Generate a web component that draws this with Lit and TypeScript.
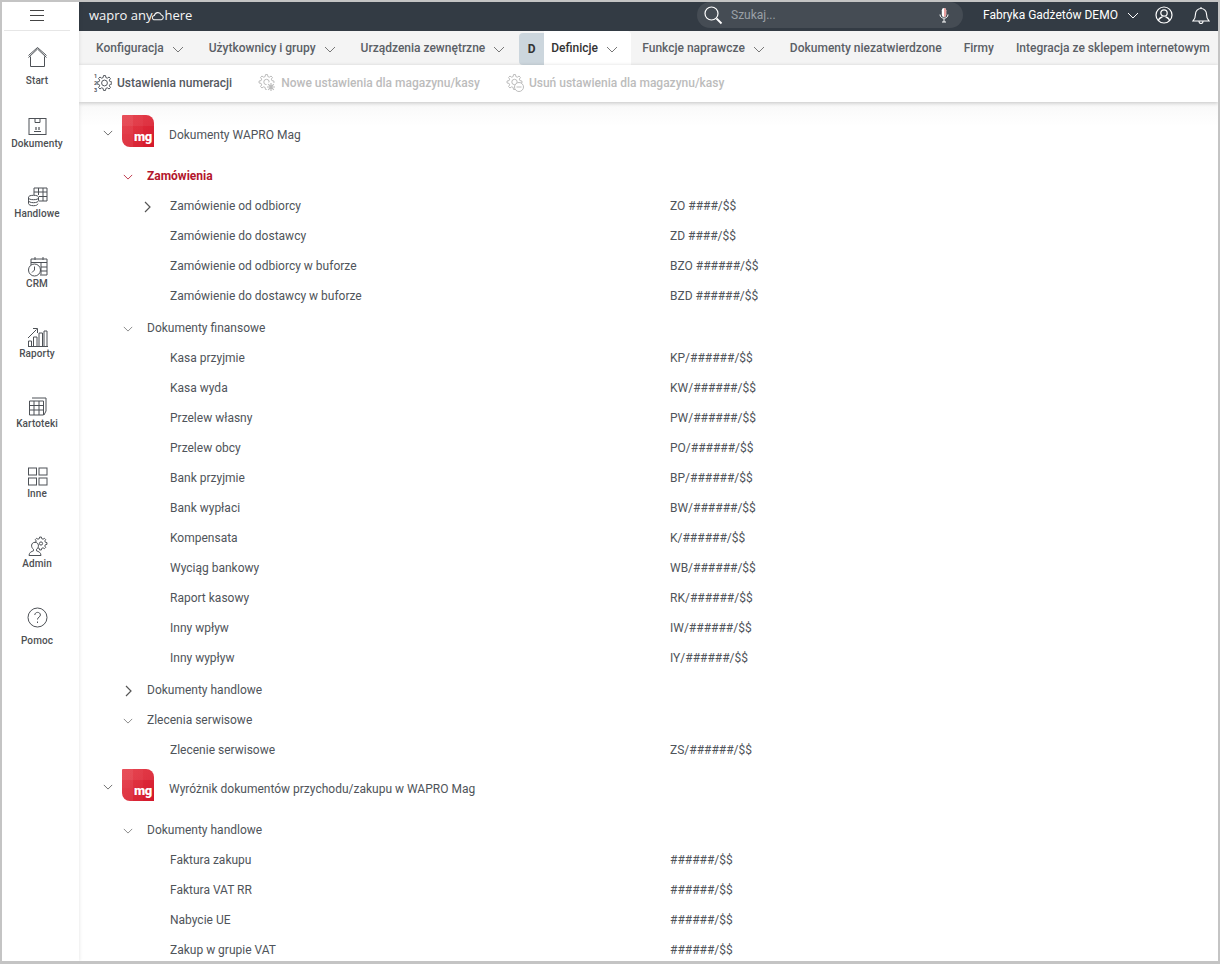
import { LitElement, html, css, svg } from "lit";
import { customElement } from "lit/decorators.js";

const chevDown = html`<svg class="chev" viewBox="0 0 12 7"><path d="M1 1l5 5 5-5" fill="none" stroke="currentColor" stroke-width="1"/></svg>`;
const chevRight = html`<svg class="chevr" viewBox="0 0 7 12"><path d="M1 1l5 5-5 5" fill="none" stroke="currentColor" stroke-width="1.2"/></svg>`;

function gearPath(cx: number, cy: number, ro: number, ri: number, teeth = 8) {
  const pts: string[] = [];
  const step = (Math.PI * 2) / teeth;
  for (let i = 0; i < teeth; i++) {
    const a = i * step - Math.PI / 2;
    const at = (r: number, d: number) =>
      `${(cx + r * Math.cos(a + d * step)).toFixed(2)} ${(cy + r * Math.sin(a + d * step)).toFixed(2)}`;
    pts.push(at(ri, -0.32), at(ro, -0.17), at(ro, 0.17), at(ri, 0.32));
  }
  return "M" + pts.join("L") + "Z";
}

const navIcons: Record<string, unknown> = {
  Start: svg`<path d="M1.500 10.500L10.500 2 19.500 10.500M1.500 8.500L10.500 0.500 19.500 8.500M3.500 9.500v10h14v-10"/>`,
  Dokumenty: svg`<rect x="2" y="2.500" width="17" height="16"/><path d="M8 2.500v4h5v-4M7 15.500h7"/><path d="M9 11v3M12 11v3" stroke-width="1.200"/>`,
  Handlowe: svg`<path d="M7 2h13v13H12M7 2v7M7 6h13M11.500 2v7M16 2v13M12 10.500h8"/><ellipse cx="6.500" cy="11.500" rx="5" ry="2.200"/><path d="M1.500 11.500v3c0 1.200 2 2.200 5 2.200s5-1 5-2.200v-3M1.500 14.500v3c0 1.200 2 2.200 5 2.200s4-.8 4.500-2"/>`,
  CRM: svg`<path d="M4 9V3h16v16h-7M4 6.500h16M8 1v3M16 1v3M14 11h6M14 15h6M14 6.500v12"/><circle cx="7.500" cy="14" r="6"/><path d="M7.500 10.500V14l-2.500 2.500"/>`,
  Raporty: svg`<path d="M1.500 20v-5h3v5M6.500 20V11h3.500v9M12 20V7h3.500v13M17 20V5h3v15M1 20.500h20M1 12L9.500 3.500M6 2.500h4.500v4.500"/>`,
  Kartoteki: svg`<path d="M5 2h14v13l-2 4M2.500 5h14v14H2.500zM2.500 9.500h14M2.500 14h14M7 5v14M12 5v14"/>`,
  Inne: svg`<rect x="1.500" y="2" width="8" height="7"/><rect x="12" y="2" width="8" height="7"/><rect x="1.500" y="12" width="8" height="7"/><rect x="12" y="12" width="8" height="7"/>`,
  Admin: svg`<path d="${gearPath(13.5, 7.5, 6.5, 5)}"/><circle cx="14" cy="7.500" r="1.600"/><path d="M2 19.500c0-3 2.500-4 4.500-4.700v-1.500c-3-2-2.500-7 1.500-7s4.500 5 1.500 7v1.500c2 .7 4.500 1.700 4.500 4.700z" fill="#fff"/>`,
};

const doc = (name: string, code: string, cls = "") => ({ name, code, cls });

@customElement("app-root")
export class AppRoot extends LitElement {
  static styles = css`
    :host {
      display: flex;
      box-sizing: border-box;
      width: 1220px;
      height: 964px;
      border: solid #c4c4c4;
      border-width: 2px 2px 3px 2px;
      background: #fff;
      font-family: Roboto, "Liberation Sans", sans-serif;
      color: #4a4f55;
      overflow: hidden;
    }
    .side {
      width: 77px;
      flex: none;
      box-sizing: border-box;
      padding-right: 7px;
      display: flex;
      flex-direction: column;
      align-items: center;
      box-shadow: 1px 0 3px rgba(0, 0, 0, 0.08);
      z-index: 2;
      background: #fff;
    }
    .burger {
      width: 66px;
      height: 27px;
      border-bottom: 1px solid #e6e6e6;
      display: flex;
      align-items: center;
      justify-content: center;
      padding-bottom: 1px;
      flex: none;
    }
    .burger svg {
      width: 14px;
      height: 13px;
      display: block;
      margin-top: -1px;
    }
    .nav {
      height: 70px;
      width: 70px;
      flex: none;
      display: flex;
      flex-direction: column;
      align-items: center;
      font-size: 10px;
      font-weight: 500;
      letter-spacing: 0.1px;
      color: #4d4f53;
    }
    .nav svg {
      width: 21px;
      height: 21px;
      fill: none;
      stroke: #4d5156;
      stroke-width: 1;
      margin-bottom: 1px;
      display: block;
    }
    .nav span {
      line-height: 12px;
    }
    .start {
      margin-top: 16px;
      height: 69px;
    }
    .start svg {
      margin-bottom: 7px;
    }
    .help {
      margin-top: 1px;
    }
    .help svg {
      margin-bottom: 7px;
    }
    .main {
      flex: 1;
      min-width: 0;
      display: flex;
      flex-direction: column;
    }
    .top {
      height: 29px;
      flex: none;
      background: #333b44;
      display: flex;
      align-items: center;
      color: #fff;
      white-space: nowrap;
    }
    .logo {
      font-family: "Open Sans", Roboto, sans-serif;
      font-size: 13px;
      width: 618px;
      box-sizing: border-box;
      padding-left: 10px;
      flex: none;
      display: flex;
      align-items: center;
      color: #f6f6f6;
      margin-top: -3px;
    }
    .logo svg {
      width: 12px;
      height: 10px;
      margin: 1px 0 0 0;
    }
    .search {
      width: 266px;
      height: 26px;
      margin-top: -3px;
      border-radius: 13px;
      background: #454c54;
      display: flex;
      align-items: center;
      flex: none;
      box-sizing: border-box;
      padding: 0 14px 0 6px;
      font-size: 12px;
      color: #9aa0a6;
    }
    .search .lens {
      width: 20px;
      height: 20px;
      margin-right: 8px;
    }
    .search span {
      flex: 1;
    }
    .search .mic {
      width: 10px;
      height: 16px;
    }
    .company {
      font-size: 12px;
      font-weight: 400;
      margin-left: 20px;
      margin-top: -3px;
      color: #fff;
      display: flex;
      align-items: center;
      flex: none;
    }
    .company .chev {
      margin-left: 9px;
      color: #fff;
    }
    .uicon {
      width: 18px;
      height: 18px;
      flex: none;
      margin-left: 16px;
      margin-top: -3px;
      fill: none;
      stroke: #fff;
    }
    .bell {
      margin-left: 19px;
    }
    .tabs {
      height: 34px;
      flex: none;
      background: #f4f4f4;
      display: flex;
      align-items: center;
      font-size: 12px;
      font-weight: 500;
      color: #5b6066;
      white-space: nowrap;
      position: relative;
    }
    .tab {
      display: flex;
      align-items: center;
      height: 100%;
    }
    .chev {
      width: 12px;
      height: 7px;
      flex: none;
      color: #777;
    }
    .tab .chev {
      margin: 2px 0 0 8px;
    }
    .badge {
      width: 25px;
      height: 32px;
      margin-top: 2px;
      background: #ccd6dd;
      border-radius: 4px 0 0 4px;
      display: flex;
      align-items: center;
      justify-content: center;
      font-weight: 700;
      color: #333;
      flex: none;
    }
    .active {
      background: #fff;
      color: #333;
      width: 87px;
      box-sizing: border-box;
      padding-left: 7px;
      border-radius: 0 4px 0 0;
      flex: none;
    }
    .tool {
      height: 37px;
      box-sizing: border-box;
      padding-bottom: 2px;
      flex: none;
      background: #fff;
      display: flex;
      align-items: center;
      font-size: 12px;
      font-weight: 500;
      color: #55595f;
      box-shadow: 0 1px 4px rgba(0, 0, 0, 0.22);
      position: relative;
      z-index: 1;
    }
    .tbtn {
      display: flex;
      align-items: center;
      white-space: nowrap;
    }
    .tbtn svg {
      width: 18px;
      height: 18px;
      fill: none;
      stroke: currentColor;
      stroke-width: 1;
      margin-right: 5px;
      flex: none;
    }
    .tbtn text {
      font: 700 5.500px Roboto, sans-serif;
      fill: currentColor;
      stroke: none;
    }
    .dis {
      color: #bcbcbc;
    }
    .content {
      flex: 1;
      min-height: 0;
      overflow: hidden;
      padding-top: 17px;
      font-size: 12px;
      color: #4f545a;
      background: linear-gradient(#f8f8f8, #fff 24px);
    }
    .row {
      display: grid;
      grid-template-columns: 591px 1fr;
      height: 30px;
      align-items: center;
    }
    .cell {
      display: flex;
      align-items: center;
      min-width: 0;
    }
    .head {
      height: 32px;
      grid-template-rows: 32px;
    }
    .head .cell {
      padding-left: 24px;
    }
    .head .chev {
      width: 10px;
      height: 6px;
      margin-top: -4px;
      margin-right: 9px;
      color: #555;
    }
    .head .nm {
      margin-left: 15px;
    }
    .mg {
      width: 32px;
      height: 32px;
      margin-bottom: 8px;
      flex: none;
      border-radius: 1px 8px 0 8px;
      background:
        linear-gradient(90deg, rgba(255, 255, 255, 0.09) 0 33%, rgba(255, 255, 255, 0.03) 33% 66%, transparent 66%),
        linear-gradient(180deg, rgba(255, 255, 255, 0.08) 0 33%, rgba(255, 255, 255, 0.02) 33% 60%, transparent 60%),
        linear-gradient(135deg, #e52e3a, #d3182b);
      color: #fff;
      font: 900 13px/1 Roboto, sans-serif;
      letter-spacing: -0.3px;
      display: flex;
      justify-content: flex-end;
      align-items: flex-end;
      padding: 0 2px 4px 0;
      box-sizing: border-box;
    }
    .lv1 .cell {
      padding-left: 44px;
    }
    .lv1 .chev {
      width: 10px;
      height: 6px;
      margin-right: 14px;
      margin-top: 2px;
    }
    .lv1 .chevr {
      width: 7px;
      height: 12px;
      margin: 2px 15px 0 2px;
      flex: none;
      color: #555;
    }
    .red {
      color: #b3162c;
      font-weight: 700;
    }
    .red .chev {
      color: #b3162c;
    }
    .lv2 .cell {
      padding-left: 91px;
    }
    .lv2 .chevr {
      width: 7px;
      height: 12px;
      margin: 2px 19px 0 -26px;
      flex: none;
      color: #555;
    }
    .gap2 {
      margin-top: 2px;
    }
    .gap10 {
      margin-top: 10px;
    }
    .gap8 {
      margin-top: 8px;
    }
  `;

  private row2(d: { name: string; code: string; cls: string }) {
    return html`<div class="row lv2 ${d.cls}">
      <div class="cell">${d.cls.includes("exp") ? chevRight : ""}<span>${d.name}</span></div>
      <div>${d.code}</div>
    </div>`;
  }

  private sect(name: string, cls = "", right = false) {
    return html`<div class="row lv1 ${cls}">
      <div class="cell">${right ? chevRight : chevDown}<span>${name}</span></div>
    </div>`;
  }

  private head(name: string, cls = "") {
    return html`<div class="row head ${cls}">
      <div class="cell">${chevDown}<div class="mg">mg</div><span class="nm">${name}</span></div>
    </div>`;
  }

  render() {
    const orders = [
      doc("Zamówienie od odbiorcy", "ZO ####/$$", "exp"),
      doc("Zamówienie do dostawcy", "ZD ####/$$"),
      doc("Zamówienie od odbiorcy w buforze", "BZO ######/$$"),
      doc("Zamówienie do dostawcy w buforze", "BZD ######/$$"),
    ];
    const fin = [
      doc("Kasa przyjmie", "KP/######/$$"),
      doc("Kasa wyda", "KW/######/$$"),
      doc("Przelew własny", "PW/######/$$"),
      doc("Przelew obcy", "PO/######/$$"),
      doc("Bank przyjmie", "BP/######/$$"),
      doc("Bank wypłaci", "BW/######/$$"),
      doc("Kompensata", "K/######/$$"),
      doc("Wyciąg bankowy", "WB/######/$$"),
      doc("Raport kasowy", "RK/######/$$"),
      doc("Inny wpływ", "IW/######/$$"),
      doc("Inny wypływ", "IY/######/$$"),
    ];
    const buy = [
      doc("Faktura zakupu", "######/$$"),
      doc("Faktura VAT RR", "######/$$"),
      doc("Nabycie UE", "######/$$"),
      doc("Zakup w grupie VAT", "######/$$"),
    ];
    const navs = ["Dokumenty", "Handlowe", "CRM", "Raporty", "Kartoteki", "Inne", "Admin"];
    return html`
      <aside class="side">
        <div class="burger">
          <svg viewBox="0 0 14 13"><path d="M0 1.500h14M0 6.500h14M0 11.500h14" stroke="#444" stroke-width="1"/></svg>
        </div>
        <div class="nav start">
          <svg viewBox="0 0 21 21">${navIcons.Start}</svg><span>Start</span>
        </div>
        ${navs.map(
          (n) => html`<div class="nav"><svg viewBox="0 0 21 21">${navIcons[n]}</svg><span>${n}</span></div>`
        )}
        <div class="nav help">
          <svg viewBox="0 0 21 21">
            <circle cx="10.500" cy="10.500" r="9.500" />
            <path d="M7.800 8c0-3.500 5.600-3.500 5.600 0 0 2.200-2.900 2-2.900 4.500M10.500 14.500v1.500" />
          </svg>
          <span>Pomoc</span>
        </div>
      </aside>
      <div class="main">
        <header class="top">
          <div class="logo">
            wapro any<svg viewBox="0 0 11 9"><path d="M2.500 8a2 2 0 0 1-.3-4A3.300 3.300 0 0 1 8.500 3.500 2.300 2.300 0 0 1 8.500 8z" fill="none" stroke="#f2f2f2" stroke-width="1"/></svg>here
          </div>
          <div class="search">
            <svg class="lens" viewBox="0 0 20 20"><circle cx="8.500" cy="8.500" r="6.500" fill="none" stroke="#fff" stroke-width="1.200"/><path d="M13.500 13.500l5 5" stroke="#fff" stroke-width="1.800"/></svg>
            <span>Szukaj...</span>
            <svg class="mic" viewBox="0 0 10 16"><rect x="2.800" y="1" width="4.400" height="9" rx="2.200" fill="#fff"/><path d="M5 1a2.200 2.200 0 0 1 2.200 2.200v4.600A2.200 2.200 0 0 1 5 10z" fill="#e8a0a0"/><path d="M1 7.500c0 5 8 5 8 0M5 12v3M3 15h4" fill="none" stroke="#fff" stroke-width="1"/></svg>
          </div>
          <div class="company">Fabryka Gadżetów DEMO ${chevDown}</div>
          <svg class="uicon" viewBox="0 0 18 18"><circle cx="9" cy="9" r="8" stroke-width="1.200"/><circle cx="9" cy="7" r="3.200" stroke-width="1.200"/><path d="M3.500 15c0-3 2.500-3.500 4-4.200M14.500 15c0-3-2.500-3.500-4-4.200" stroke-width="1.200"/></svg>
          <svg class="uicon bell" viewBox="0 0 18 18"><path d="M1 15c2-2 2.500-4 2.500-7a5.500 5.500 0 0 1 11 0c0 3 .5 5 2.500 7zM7 15.500a2 2 0 0 0 4 0M9 1v1.500" stroke-width="1.100"/></svg>
        </header>
        <nav class="tabs">
          <div class="tab" style="margin-left:17px">Konfiguracja ${chevDown}</div>
          <div class="tab" style="margin-left:25px">Użytkownicy i grupy ${chevDown}</div>
          <div class="tab" style="margin-left:25px">Urządzenia zewnętrzne ${chevDown}</div>
          <div class="badge" style="margin-left:14px">D</div>
          <div class="tab active">Definicje ${chevDown}</div>
          <div class="tab" style="margin-left:11px">Funkcje naprawcze ${chevDown}</div>
          <div class="tab" style="margin-left:25px">Dokumenty niezatwierdzone</div>
          <div class="tab" style="margin-left:22px">Firmy</div>
          <div class="tab" style="margin-left:22px">Integracja ze sklepem internetowym</div>
        </nav>
        <div class="tool">
          <div class="tbtn" style="margin-left:15px">
            <svg viewBox="0 0 18 18"><text x="0" y="3.500">1</text><text x="0" y="10.500">2</text><text x="0" y="17.500">3</text><path d="${gearPath(10.5, 9, 7.5, 5.6)}"/><circle cx="10.500" cy="9" r="2.900"/></svg>
            Ustawienia numeracji
          </div>
          <div class="tbtn dis" style="margin-left:26px">
            <svg viewBox="0 0 18 18"><path d="${gearPath(8.5, 8, 7.5, 5.6)}"/><circle cx="8.500" cy="8" r="2.700"/><circle cx="13" cy="13" r="5" fill="#fff" stroke="none"/><path d="M13 9v8M9 13h8M10.200 10.200l5.600 5.600M15.800 10.200l-5.600 5.600" stroke-width="1.200"/></svg>
            Nowe ustawienia dla magazynu/kasy
          </div>
          <div class="tbtn dis" style="margin-left:26px">
            <svg viewBox="0 0 18 18"><path d="${gearPath(8.5, 8, 7.5, 5.6)}"/><circle cx="8.500" cy="8" r="2.700"/><circle cx="13" cy="13" r="4.500" fill="#fff"/><path d="M10.500 13h5"/></svg>
            Usuń ustawienia dla magazynu/kasy
          </div>
        </div>
        <section class="content">
          ${this.head("Dokumenty WAPRO Mag")}
          ${this.sect("Zamówienia", "red gap10")}
          ${orders.map((d) => this.row2(d))}
          ${this.sect("Dokumenty finansowe", "gap2")}
          ${fin.map((d) => this.row2(d))}
          ${this.sect("Dokumenty handlowe", "gap2", true)}
          ${this.sect("Zlecenia serwisowe")}
          ${this.row2(doc("Zlecenie serwisowe", "ZS/######/$$"))}
          ${this.head("Wyróżnik dokumentów przychodu/zakupu w WAPRO Mag", "gap8")}
          ${this.sect("Dokumenty handlowe", "gap10")}
          ${buy.map((d) => this.row2(d))}
        </section>
      </div>
    `;
  }
}
